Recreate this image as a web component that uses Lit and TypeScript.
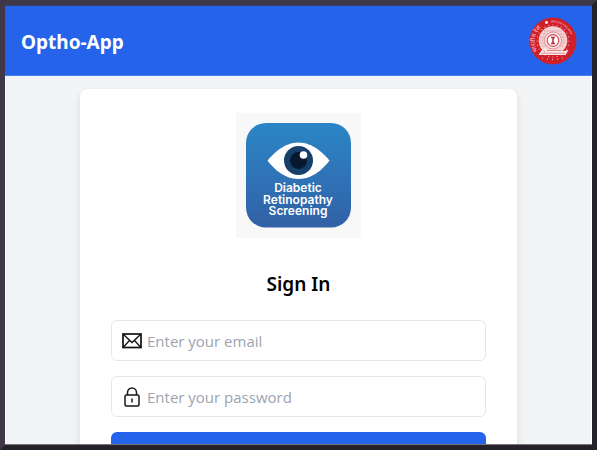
import { LitElement, html, css, svg } from "lit";
import { customElement } from "lit/decorators.js";

@customElement("rail-emblem")
class RailEmblem extends LitElement {
  static styles = css`
    :host { display: block; width: 48px; height: 48px; }
    svg { display: block; width: 100%; height: 100%; }
    .ring { font-family: "Noto Sans", sans-serif; font-weight: 500; fill: #f3b4b8; }
  `;
  render() {
    const teeth = Array.from({ length: 24 }, (_, i) => {
      const a = (i * Math.PI) / 12;
      return svg`<circle cx=${24 + 16 * Math.cos(a)} cy=${24 + 16 * Math.sin(a)} r="0.6" fill="#f3b4b8"/>`;
    });
    return html`<svg viewBox="0 0 48 48" role="img" aria-label="Indian Railways">
      <defs>
        <path id="arcLeft" d="M9 34A18 18 0 0 1 17 7.500" />
        <path id="arcRight" d="M22 5.700A18.500 18.500 0 0 1 42.500 24" />
      </defs>
      <circle cx="24" cy="24" r="23.500" fill="#cf2029" />
      <circle cx="24" cy="23.500" r="14.300" fill="#f4d3d5" />
      ${teeth}
      <path d="M13 17h22M11 20h26M11 23h26M11 26h26M13 29h22M15 14h18" stroke="#e08a8f" stroke-width="0.6" />
      <circle cx="24" cy="23.500" r="8.500" fill="#fbe9ea" stroke="#e07c82" stroke-width="0.8" />
      <circle cx="24" cy="23.500" r="5.800" fill="#fff" stroke="#d64c53" stroke-width="1.200" />
      <path d="M22 20.500h4M24 20v6M22 26.500h4" stroke="#b6303a" stroke-width="1.600" />
      <path d="M9.500 38l4-6 3-1 2 3h16l5-1-3 5z" fill="#fbe9ea" />
      <path d="M12 36.200h24M18 33.500h14M14 33l2 2" stroke="#dc757b" stroke-width="0.8" />
      <path d="M13 41h1M18 42h1M23 42.500h1M28 42h1M33 41h1" stroke="#f3b4b8" stroke-width="1" />
      <circle cx="17.500" cy="5.500" r="1.400" fill="#fff" />
      <text class="ring" font-size="6"><textPath href="#arcLeft">भारतीय रेल</textPath></text>
      <text class="ring" font-size="3"><textPath href="#arcRight">INDIAN RAILWAY</textPath></text>
    </svg>`;
  }
}

@customElement("screening-logo")
class ScreeningLogo extends LitElement {
  static styles = css`
    :host { display: block; width: 125px; height: 125px; }
    svg { display: block; width: 100%; height: 100%; }
    text { font: 600 12px Inter, sans-serif; fill: #fff; text-anchor: middle; }
  `;
  render() {
    return html`<svg viewBox="0 0 125 125" role="img" aria-label="Diabetic Retinopathy Screening">
      <defs>
        <linearGradient id="tile" x1="0" y1="0" x2="0" y2="1">
          <stop offset="0" stop-color="#2b86c5" />
          <stop offset="0.500" stop-color="#2e74b7" />
          <stop offset="1" stop-color="#3260a5" />
        </linearGradient>
      </defs>
      <rect width="125" height="125" fill="#f8f8f8" />
      <rect x="10" y="10" width="105" height="104.500" rx="20" fill="url(#tile)" />
      <path d="M31.500 47.500C37 41 48 29.500 62.500 29.500S88 41 93.500 47.500C88 55 77 66 62.500 66S37 55 31.500 47.500Z" fill="#fff" />
      <circle cx="62.500" cy="47.500" r="14.500" fill="#163f69" />
      <circle cx="62.500" cy="47.500" r="8.500" fill="#07182f" />
      <circle cx="67.500" cy="42" r="3.800" fill="#fff" />
      <text x="62" y="79">Diabetic</text>
      <text x="62" y="91">Retinopathy</text>
      <text x="62" y="102">Screening</text>
    </svg>`;
  }
}

@customElement("app-root")
class AppRoot extends LitElement {
  static styles = css`
    * { box-sizing: border-box; }
    :host {
      display: block;
      height: 100vh;
      padding-right: 3px;
      background: #fff;
      font-family: "Noto Sans", "Open Sans", sans-serif;
    }
    .frame {
      height: 100%;
      border: 5px solid #403748;
      border-right-color: #23212b;
      border-bottom-color: #272229;
      overflow: hidden;
      background: #f3f4f6;
    }
    .screen {
      display: flex;
      flex-direction: column;
      height: 100%;
      overflow: hidden;
      border-top: 1px solid #37416f;
      border-bottom: 1px solid #77757b;
    }
    header {
      flex: none;
      display: flex;
      align-items: center;
      justify-content: space-between;
      height: 70px;
      padding: 0 15px 0 16px;
      background: #2563eb;
      border-bottom: 1px solid #4c80ee;
    }
    .brand { margin: 2px 0 0; color: #fff; font-size: 19px; line-height: 28px; font-weight: 700; }
    main {
      flex: none;
      padding: 13px 16px;
      border: 1px solid #fff;
      border-width: 0 1px;
    }
    .card {
      display: flex;
      flex-direction: column;
      align-items: center;
      gap: 15px;
      max-width: 437px;
      margin: 0 auto;
      padding: 24px 31px 32px;
      border-radius: 8px;
      background: #fff;
      box-shadow: 0 4px 8px rgba(0, 0, 0, 0.1);
    }
    h2 { margin: 17px 0 7px; font-size: 19px; line-height: 28px; font-weight: 600; color: #000; }
    .field {
      display: flex;
      align-items: center;
      gap: 4px;
      width: 100%;
      height: 41px;
      padding: 0 9px;
      border: 1px solid #e5e7eb;
      border-radius: 6px;
    }
    .field svg { flex: none; width: 22px; height: 22px; }
    input {
      flex: 1;
      min-width: 0;
      padding: 0;
      border: 0;
      outline: 0;
      background: none;
      font: 15px/24px "Open Sans", "Noto Sans", sans-serif;
      color: #111827;
    }
    input::placeholder { color: #9ca3af; opacity: 1; }
    button { width: 100%; height: 40px; border: 0; border-radius: 6px; background: #2563eb; }
  `;

  render() {
    return html`<div class="frame"><div class="screen">
      <header>
        <h1 class="brand">Optho-App</h1>
        <rail-emblem></rail-emblem>
      </header>
      <main>
        <form class="card">
          <screening-logo></screening-logo>
          <h2>Sign In</h2>
          <label class="field">
            <svg viewBox="0 0 22 22" fill="none" stroke="#111" aria-hidden="true">
              <rect x="2" y="4" width="18" height="13.500" stroke-width="1.700" />
              <path d="M2 4l9 8.500L20 4M2 17.500l6.500-7M20 17.500l-6.500-7" stroke-width="1.300" />
            </svg>
            <input type="email" placeholder="Enter your email" aria-label="Email" />
          </label>
          <label class="field">
            <svg viewBox="0 0 22 22" fill="none" stroke="#161616" stroke-width="1.500" aria-hidden="true">
              <rect x="4" y="9" width="14" height="11" rx="1.500" />
              <path d="M6.500 9V6.500a4.500 4.500 0 0 1 9 0V9M11 12.500v4" />
            </svg>
            <input type="password" placeholder="Enter your password" aria-label="Password" />
          </label>
          <button type="submit" aria-label="Sign In"></button>
        </form>
      </main>
    </div></div>`;
  }
}
